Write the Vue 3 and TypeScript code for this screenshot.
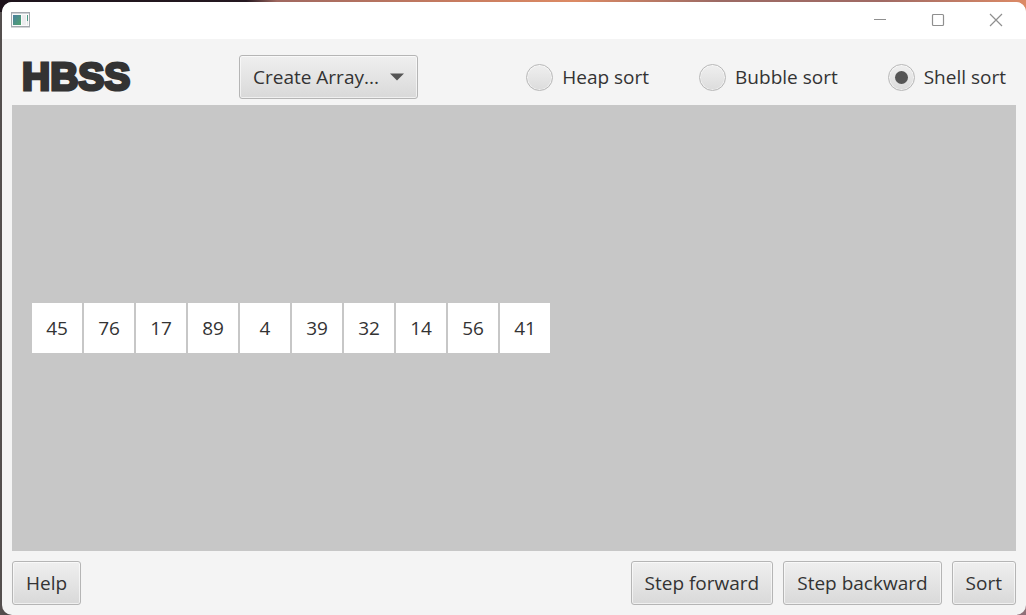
<script setup lang="ts">
import { ref } from 'vue'

type Algorithm = 'heap' | 'bubble' | 'shell'

const algorithms: { id: Algorithm; label: string }[] = [
  { id: 'heap', label: 'Heap sort' },
  { id: 'bubble', label: 'Bubble sort' },
  { id: 'shell', label: 'Shell sort' },
]

const selected = ref<Algorithm>('shell')
const source = ref('create')
const values = ref<number[]>([45, 76, 17, 89, 4, 39, 32, 14, 56, 41])
</script>

<template>
  <div class="desktop">
    <div class="window">
      <header class="titlebar">
        <svg class="app-icon" width="19" height="16" viewBox="0 0 19 16" aria-hidden="true">
          <defs>
            <linearGradient id="pane" x1="0" y1="0" x2="1" y2="1">
              <stop offset="0" stop-color="#4a7fa0" />
              <stop offset="1" stop-color="#4fa36c" />
            </linearGradient>
          </defs>
          <rect x="0.5" y="0.5" width="18" height="14" fill="#fafafa" stroke="#a4a8ae" />
          <path d="M0 15.5H19" stroke="#d4d6d8" />
          <path d="M1 1.5H18" stroke="#cdd0d5" />
          <rect x="2" y="3" width="8" height="10" fill="url(#pane)" />
          <rect x="11" y="3" width="4" height="10" fill="#ececee" />
          <rect x="16" y="3" width="1" height="6" fill="#4f9a86" />
          <rect x="16" y="9" width="1" height="4" fill="#e2e6e6" />
        </svg>
        <div class="window-controls">
          <button type="button" aria-label="Minimize">
            <svg width="14" height="14" viewBox="0 0 14 14"><path d="M1 6.5H13" /></svg>
          </button>
          <button type="button" aria-label="Maximize">
            <svg width="14" height="14" viewBox="0 0 14 14"><rect x="1.5" y="1.5" width="11" height="11" rx="1" /></svg>
          </button>
          <button type="button" aria-label="Close">
            <svg width="14" height="14" viewBox="0 0 14 14"><path d="M1 1L13 13M13 1L1 13" /></svg>
          </button>
        </div>
      </header>

      <div class="toolbar">
        <h1 class="logo">HBSS</h1>
        <div class="menu">
          <select v-model="source" class="control" aria-label="Create Array">
            <option value="create">Create Array...</option>
          </select>
          <svg class="arrow" width="14" height="8" viewBox="0 0 14 8" aria-hidden="true">
            <path d="M0 0.5H14L7 7.5Z" />
          </svg>
        </div>
        <div class="algorithms" role="radiogroup" aria-label="Algorithm">
          <label v-for="a in algorithms" :key="a.id" class="radio">
            <input v-model="selected" type="radio" name="algorithm" :value="a.id" />
            <span>{{ a.label }}</span>
          </label>
        </div>
      </div>

      <main class="canvas">
        <ol class="cells">
          <li v-for="(v, i) in values" :key="i">{{ v }}</li>
        </ol>
      </main>

      <footer class="actions">
        <button type="button" class="control help">Help</button>
        <button type="button" class="control">Step forward</button>
        <button type="button" class="control">Step backward</button>
        <button type="button" class="control">Sort</button>
      </footer>
    </div>
  </div>
</template>

<style>
body {
  margin: 0;
}
</style>

<style scoped>
.desktop {
  box-sizing: border-box;
  height: 100vh;
  padding: 2px 0 0 2px;
  background:
    linear-gradient(90deg, #1d131b 0%, #241820 24%, #a06860 27%, #c87c60 45%, #dc8a64 56%, #9c6a64 70%, #a06a64 86%, #dc8a66 100%) top / 100% 12px no-repeat,
    linear-gradient(90deg, #55504f 0%, #3a2a30 4%, #8f7078 100%);
  font-family: "Open Sans", "Noto Sans", sans-serif;
  font-size: 19px;
  line-height: 26px;
  color: #333;
}

.window {
  display: flex;
  flex-direction: column;
  height: 100%;
  border-radius: 10px;
  overflow: hidden;
  background: #f4f4f4;
}

.titlebar {
  display: flex;
  align-items: center;
  justify-content: space-between;
  box-sizing: border-box;
  height: 37px;
  padding: 0 1px 2px 9px;
  background: #fff;
}

.window-controls {
  display: flex;
}

.window-controls button {
  display: grid;
  place-items: center;
  width: 58px;
  height: 34px;
  padding: 0;
  border: 0;
  background: none;
}

.window-controls svg {
  fill: none;
  stroke: #8f8f8f;
  stroke-width: 1.2;
}

.toolbar {
  display: flex;
  align-items: center;
  height: 66px;
  padding: 10px 20px 0;
  box-sizing: border-box;
}

.logo {
  width: 217px;
  margin: 0;
  font-family: "Liberation Sans", Arial, sans-serif;
  font-size: 39px;
  font-weight: 700;
  line-height: 44px;
  color: #333;
  -webkit-text-stroke: 3px #333;
}

.menu {
  position: relative;
}

.control {
  box-sizing: border-box;
  height: 44px;
  padding: 0 13px;
  border: 1px solid #b5b5b5;
  border-radius: 3px;
  background: linear-gradient(#efefef, #d9d9d9);
  box-shadow: inset 0 0 0 1px rgba(255, 255, 255, 0.6);
  color: #333;
  font: inherit;
}

select.control {
  display: block;
  width: 179px;
  appearance: none;
}

.arrow {
  position: absolute;
  top: 18px;
  right: 14px;
  fill: #555;
  pointer-events: none;
}

.algorithms {
  display: flex;
  gap: 50px;
  margin-left: auto;
}

.radio {
  display: flex;
  align-items: center;
  gap: 9px;
}

.radio input {
  appearance: none;
  display: grid;
  place-items: center;
  box-sizing: border-box;
  width: 27px;
  height: 27px;
  margin: 0;
  border: 1px solid #b8b8b8;
  border-radius: 50%;
  background: linear-gradient(#efefef, #dcdcdc);
  box-shadow: inset 0 0 0 1px rgba(255, 255, 255, 0.5);
}

.radio input:checked::before {
  content: "";
  width: 13px;
  height: 13px;
  border-radius: 50%;
  background: #555;
}

.canvas {
  flex: 1;
  display: flex;
  align-items: center;
  margin: 0 10px;
  padding: 0 20px;
  background: #c7c7c7;
}

.cells {
  display: flex;
  gap: 2px;
  margin: 0;
  padding: 0;
  list-style: none;
}

.cells li {
  display: grid;
  place-items: center;
  width: 50px;
  height: 50px;
  background: #fff;
}

.actions {
  display: flex;
  gap: 10px;
  padding: 10px;
}

.help {
  margin-right: auto;
}
</style>
